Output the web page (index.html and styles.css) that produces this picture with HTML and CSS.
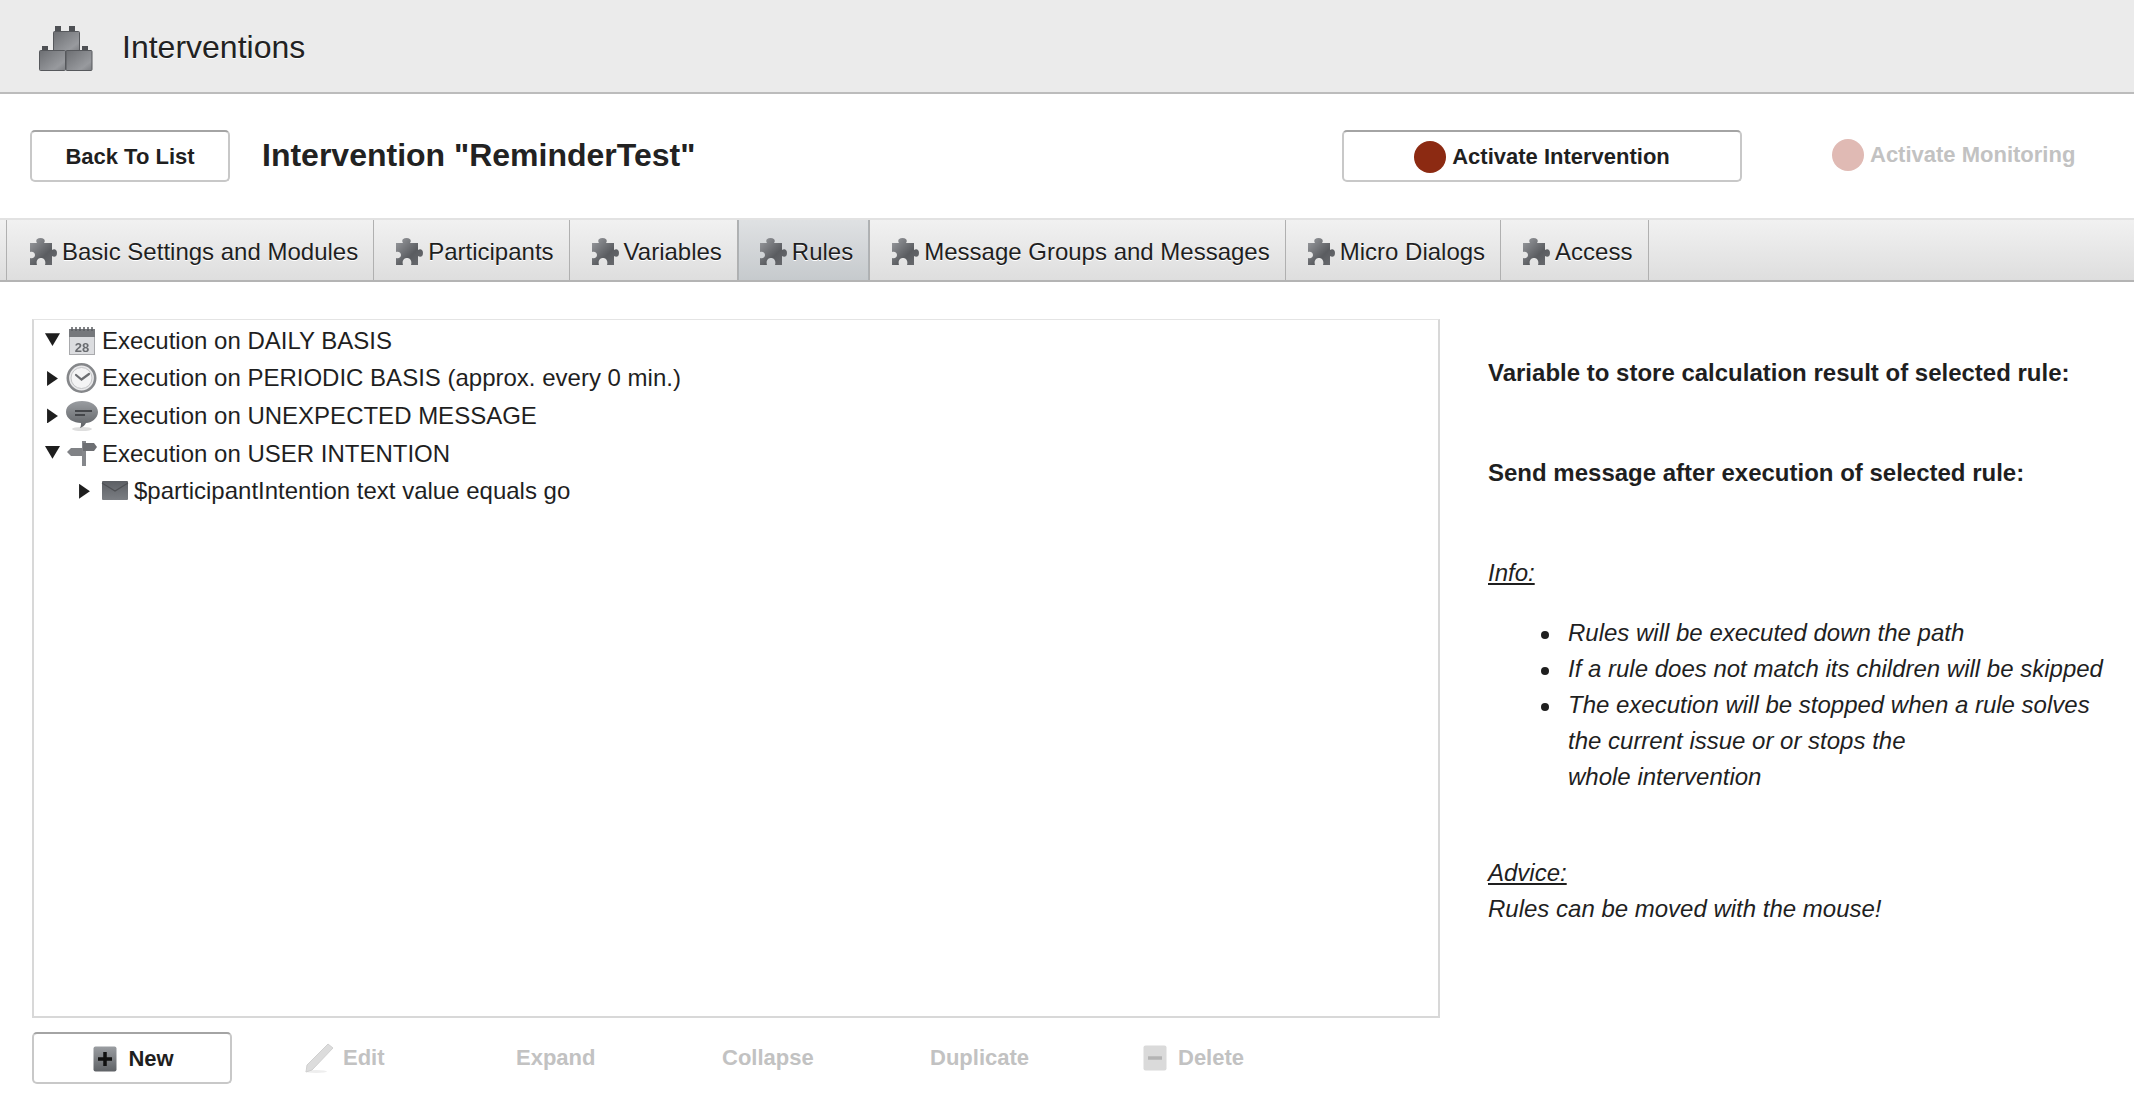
FILE: index.html
```html
<!DOCTYPE html>
<html lang="en">
<head>
<meta charset="utf-8">
<title>Interventions</title>
<link rel="stylesheet" href="styles.css">
</head>
<body>
<svg class="defs" width="0" height="0" aria-hidden="true">
  <defs>
    <linearGradient id="g-grey" x1="0" y1="0" x2="0" y2="1">
      <stop offset="0" stop-color="#9a9da1"/>
      <stop offset="1" stop-color="#5f6266"/>
    </linearGradient>
    <linearGradient id="g-slate" x1="0" y1="0" x2="0" y2="1">
      <stop offset="0" stop-color="#5c5f64"/>
      <stop offset="1" stop-color="#7b7e83"/>
    </linearGradient>
    <linearGradient id="g-puzzle" x1="0" y1="0" x2="1" y2="1">
      <stop offset="0" stop-color="#9b9da1"/>
      <stop offset=".6" stop-color="#5a5c60"/>
      <stop offset="1" stop-color="#6a6c70"/>
    </linearGradient>
    <linearGradient id="g-brick" x1="0" y1="0" x2="1" y2="1">
      <stop offset="0" stop-color="#6c6e72"/>
      <stop offset=".75" stop-color="#989a9e"/>
      <stop offset="1" stop-color="#7c7e82"/>
    </linearGradient>
    <symbol id="puzzle" viewBox="0 0 27 27">
      <path d="M0 5H7C5.500 3 6 0 10.500 0S15.500 3 14 5H22V12C24 10.500 27 11 27 15S24 19.500 22 18V27H15C16 24 15 20 11 20S6 24 7 27H0V20C3 21 5 19 5 17S3 13 0 14Z" fill="url(#g-puzzle)"/>
    </symbol>
  </defs>
</svg>

<header class="topbar">
  <svg class="bricks" viewBox="0 0 54 46" width="54" height="46" aria-hidden="true">
    <path d="M16 1h6v6h-6zM30 1h6v6h-6zM3 21h6v5H3zM43 21h6v5h-6z" fill="#4e5054"/>
    <rect x="14.500" y="6.500" width="26" height="20" rx="1" fill="url(#g-brick)" stroke="#56585c"/>
    <rect x=".5" y="25.500" width="26" height="20" rx="1" fill="url(#g-brick)" stroke="#56585c"/>
    <rect x="27" y="25.500" width="26" height="20" rx="1" fill="url(#g-brick)" stroke="#56585c"/>
  </svg>
  <span class="topbar-title">Interventions</span>
</header>

<section class="actions">
  <button class="btn btn-back">Back To List</button>
  <h1 class="page-title">Intervention "ReminderTest"</h1>
  <button class="btn btn-activate"><span class="dot"></span>Activate Intervention</button>
  <span class="monitoring"><span class="dot dot-faded"></span>Activate Monitoring</span>
</section>

<nav class="tabs">
  <a class="tab"><svg class="tab-icon"><use href="#puzzle"/></svg>Basic Settings and Modules</a>
  <a class="tab"><svg class="tab-icon"><use href="#puzzle"/></svg>Participants</a>
  <a class="tab"><svg class="tab-icon"><use href="#puzzle"/></svg>Variables</a>
  <a class="tab tab-active"><svg class="tab-icon"><use href="#puzzle"/></svg>Rules</a>
  <a class="tab"><svg class="tab-icon"><use href="#puzzle"/></svg>Message Groups and Messages</a>
  <a class="tab"><svg class="tab-icon"><use href="#puzzle"/></svg>Micro Dialogs</a>
  <a class="tab"><svg class="tab-icon"><use href="#puzzle"/></svg>Access</a>
</nav>

<main class="content">
  <div class="left">
    <div class="tree">
      <div class="row">
        <span class="arrow arrow-down"></span>
        <svg class="node-icon" viewBox="0 0 30 30" aria-hidden="true">
          <rect x="1.500" y="4" width="25" height="24.500" fill="#dcdde0" stroke="#a8a9ac"/>
          <rect x="1" y="3" width="26" height="8" fill="#76787c"/>
          <path d="M4 1v4M8 1v4M12 1v4M16 1v4M20 1v4M24 1v4" stroke="#5a5c60" stroke-width="1.500"/>
          <text class="cal-num" x="14" y="26">28</text>
        </svg>
        <span class="label">Execution on DAILY BASIS</span>
      </div>
      <div class="row">
        <span class="arrow arrow-right"></span>
        <svg class="node-icon" viewBox="0 0 30 30" aria-hidden="true">
          <circle cx="13.500" cy="15" r="13.700" fill="#e9e9eb" stroke="#85878a" stroke-width="2.600"/>
          <circle cx="13.500" cy="15" r="10.500" fill="#f4f4f5" stroke="#c4c5c7"/>
          <path d="M8 12l5.500 4.500L21 11" fill="none" stroke="#6c6e72" stroke-width="2.200" stroke-linecap="round"/>
        </svg>
        <span class="label">Execution on PERIODIC BASIS (approx. every 0 min.)</span>
      </div>
      <div class="row">
        <span class="arrow arrow-right"></span>
        <svg class="node-icon" viewBox="0 0 30 30" aria-hidden="true">
          <ellipse cx="14" cy="28" rx="10" ry="2" fill="#dedede"/>
          <path d="M14 0c9 0 16 4.500 16 11s-7 11-12 11c-1 2-3 4-6 5 1-2 1-3 1-5C6 22-2 18-2 11S5 0 14 0z" fill="url(#g-grey)"/>
          <path d="M7 10h17M7 14h10" stroke="#44464a" stroke-width="2.200"/>
        </svg>
        <span class="label">Execution on UNEXPECTED MESSAGE</span>
      </div>
      <div class="row">
        <span class="arrow arrow-down"></span>
        <svg class="node-icon" viewBox="0 0 30 30" aria-hidden="true">
          <path d="M14 2h4v25h-4z" fill="#85878b"/>
          <path d="M15 4h11l3 4-3 4H15z" fill="#6d6f73"/>
          <path d="M14 9H3l-4 4 4 4h11z" fill="#808286"/>
        </svg>
        <span class="label">Execution on USER INTENTION</span>
      </div>
      <div class="row row-child">
        <span class="arrow arrow-right"></span>
        <svg class="node-icon" viewBox="0 0 30 30" aria-hidden="true">
          <rect x="2" y="5" width="26" height="19" rx="1" fill="url(#g-slate)"/>
          <path d="M2 7l13 8 13-8" fill="none" stroke="#4e5054" stroke-width="1.200"/>
        </svg>
        <span class="label">$participantIntention text value equals go</span>
      </div>
    </div>
    <div class="tree-actions">
      <button class="btn btn-new">
        <svg class="new-icon" viewBox="0 0 24 26" aria-hidden="true">
          <rect x=".5" y=".5" width="23" height="25" rx="2" fill="url(#g-grey)"/>
          <path d="M12 6v14M5 13h14" stroke="#111" stroke-width="3.500"/>
        </svg>
        New
      </button>
      <span class="tool tool-edit">
        <svg class="edit-icon" viewBox="0 0 30 30" aria-hidden="true">
          <ellipse cx="12" cy="28.500" rx="11" ry="1.500" fill="#eee"/>
          <path d="M24 1l5 4L8 27l-6 2 1-7z" fill="#dcdcdc" stroke="#d0d0d0"/>
        </svg>
        Edit
      </span>
      <span class="tool tool-expand">Expand</span>
      <span class="tool tool-collapse">Collapse</span>
      <span class="tool tool-duplicate">Duplicate</span>
      <span class="tool tool-delete">
        <svg class="delete-icon" viewBox="0 0 24 26" aria-hidden="true">
          <rect x=".5" y=".5" width="23" height="25" rx="2" fill="#dadada"/>
          <path d="M5 13h14" stroke="#b4b4b4" stroke-width="3.500"/>
        </svg>
        Delete
      </span>
    </div>
  </div>
  <aside class="side">
    <p class="side-head side-first">Variable to store calculation result of selected rule:</p>
    <p class="side-head side-second">Send message after execution of selected rule:</p>
    <p class="note note-info"><u>Info:</u></p>
    <ul class="note-list">
      <li>Rules will be executed down the path</li>
      <li>If a rule does not match its children will be skipped</li>
      <li>The execution will be stopped when a rule solves<br>the current issue or or stops the<br>whole intervention</li>
    </ul>
    <p class="note note-advice"><u>Advice:</u><br>Rules can be moved with the mouse!</p>
  </aside>
</main>
</body>
</html>
```

FILE: styles.css
```css
* { box-sizing: border-box; }
html, body { margin: 0; height: 100%; }
body {
  background: #fff;
  color: #1f1f1f;
  font-family: "Liberation Sans", Arial, sans-serif;
  font-size: 24px;
  overflow: hidden;
}
.defs { display: block; height: 0; }

.topbar {
  display: flex;
  align-items: center;
  height: 94px;
  padding: 0 0 0 39px;
  background: #ebebeb;
  border-bottom: 2px solid #bcbcbc;
}
.bricks { flex: none; margin-top: 4px; filter: blur(.7px); overflow: visible; }
.topbar-title {
  margin: 2px 0 0 29px;
  font-size: 32px;
  color: #222;
  text-shadow: 0 1px 0 #fff;
}

.actions {
  display: flex;
  align-items: center;
  height: 124px;
  padding: 0 0 0 30px;
}
.btn {
  display: flex;
  align-items: center;
  justify-content: center;
  height: 52px;
  background: #fff;
  border: 2px solid #c8c8c8;
  border-top-color: #a4a4a4;
  border-radius: 5px;
  color: #1f1f1f;
  font: bold 22px "Liberation Sans", Arial, sans-serif;
  padding: 2px 0 0;
}
.btn-back { width: 200px; }
.page-title {
  margin: -1px 0 0 32px;
  font-size: 32px;
  font-weight: bold;
  color: #222;
  width: 1080px;
}
.btn-activate { width: 400px; }
.dot {
  display: inline-block;
  width: 32px;
  height: 32px;
  margin-right: 6px;
  border-radius: 50%;
  background: #8c2a12;
}
.dot-faded { background: #e0bab4; }
.monitoring {
  display: flex;
  align-items: center;
  margin: -3px 0 0 90px;
  font-size: 22px;
  font-weight: bold;
  color: #c2c2c2;
}

.tabs {
  display: flex;
  height: 64px;
  padding-left: 6px;
  background: linear-gradient(#f1f1f1, #dedede);
  border-top: 2px solid #e2e2e2;
  border-bottom: 2px solid #b4b4b4;
}
.tab {
  display: flex;
  align-items: center;
  padding: 3px 15px 0 22px;
  border-right: 1px solid #b0b0b0;
  color: #1f1f1f;
  font-size: 24px;
  text-shadow: 0 1px 0 #fff;
}
.tab:first-child { border-left: 1px solid #b0b0b0; padding-left: 23px; }
.tab:last-child { padding-right: 16px; }
.tab-active {
  padding-right: 16px;
  background: linear-gradient(#dfe1e3, #c6cacd);
  box-shadow: inset 1px 0 0 #aeb2b5, inset -1px 0 0 #aeb2b5;
}
.tab-icon { width: 27px; height: 27px; margin-right: 5px; flex: none; filter: blur(.3px); }

.content {
  display: flex;
  padding: 37px 0 0 32px;
}
.left { width: 1408px; flex: none; }
.tree {
  height: 699px;
  padding: 2px 0 0 10px;
  border: 2px solid #d8d8d8;
  border-top: 1px solid #e4e4e4;
}
.row {
  display: flex;
  align-items: center;
  height: 37.600px;
  font-size: 24px;
}
.row-child { padding-left: 32px; }
.arrow { width: 16px; height: 15px; flex: none; background: #1e1e1e; }
.arrow-down { clip-path: polygon(6% 0, 100% 0, 53% 85%); }
.arrow-right { clip-path: polygon(19% 0, 87% 50%, 19% 100%); }
.node-icon { width: 30px; height: 30px; margin: 0 4px 0 8px; flex: none; overflow: visible; filter: blur(.4px); }

.tree-actions {
  display: flex;
  align-items: center;
  height: 52px;
  margin-top: 14px;
}
.btn-new { width: 200px; padding-left: 3px; }
.new-icon { width: 24px; height: 26px; margin-right: 11px; filter: blur(.3px); }
.tool {
  display: flex;
  align-items: center;
  margin-top: -1px;
  font-size: 22px;
  font-weight: bold;
  color: #c2c2c2;
}
.tool-edit { margin-left: 72px; width: 212px; }
.edit-icon { width: 30px; height: 30px; margin-right: 9px; filter: blur(.3px); }
.tool-expand { width: 206px; }
.tool-collapse { width: 208px; }
.tool-duplicate { width: 213px; }
.delete-icon { width: 24px; height: 26px; margin-right: 11px; filter: blur(.3px); }

.side { flex: none; width: 680px; padding-left: 48px; line-height: 36px; }
.side p { margin: 0; }
.side-head { font-weight: bold; }
.side .side-first { margin-top: 36px; }
.side .side-second { margin-top: 64px; }
.note { font-style: italic; }
.side .note-info { margin-top: 64px; }
.note-list {
  margin: 24px 0 0;
  padding: 0 0 0 80px;
  font-style: italic;
  list-style: none;
}
.note-list li { position: relative; }
.note-list li::before {
  content: "";
  position: absolute;
  left: -27px;
  top: 16px;
  width: 8px;
  height: 8px;
  border-radius: 50%;
  background: #1f1f1f;
}
.side .note-advice { margin-top: 60px; }
.cal-num { font-size: 13px; font-weight: bold; text-anchor: middle; fill: #6a6c70; font-family: "Liberation Sans", sans-serif; }
```
